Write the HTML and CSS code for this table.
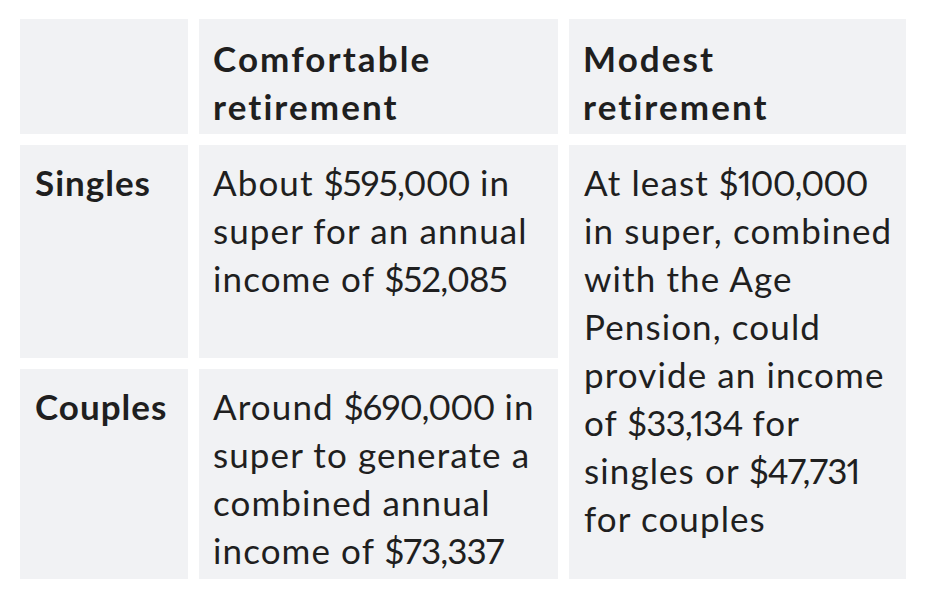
FILE: index.html
```html
<!DOCTYPE html>
<html lang="en">
<head>
<meta charset="utf-8">
<title>Retirement standard</title>
<link rel="stylesheet" href="styles.css">
</head>
<body>
<div class="table">
  <div class="cell head"></div>
  <div class="cell head">Comfortable<br>retirement</div>
  <div class="cell head">Modest<br>retirement</div>

  <div class="cell label">Singles</div>
  <div class="cell">About <span class="amt">$595,000</span> in<br>super for an annual<br>income of <span class="amt">$52,085</span></div>
  <div class="cell tall">At least <span class="amt">$100,000</span><br>in super, combined<br>with the Age<br>Pension, could<br>provide an income<br>of <span class="amt">$33,134</span> for<br>singles or <span class="amt">$47,731</span><br>for couples</div>

  <div class="cell label">Couples</div>
  <div class="cell">Around <span class="amt">$690,000</span> in<br>super to generate a<br>combined annual<br>income of <span class="amt">$73,337</span></div>
</div>
</body>
</html>
```

FILE: styles.css
```css
html, body {
  margin: 0;
  padding: 0;
  background: #ffffff;
}

body {
  padding: 19px 0 0 20px;
  font-family: Lato, "Liberation Sans", sans-serif;
  color: #1f1f1f;
}

.table {
  display: grid;
  grid-template-columns: 168px 359px 337px;
  grid-template-rows: 115px 213px 210px;
  gap: 11px;
}

.cell {
  background: #f1f2f4;
  padding: 13px 6px 0 14px;
  font-size: 35px;
  line-height: 48px;
  letter-spacing: 1.1px;
  font-variant-numeric: proportional-nums;
  white-space: nowrap;
  box-sizing: border-box;
}

.amt {
  letter-spacing: -0.9px;
}

.head {
  font-weight: 700;
  letter-spacing: 2.1px;
  padding-top: 15px;
}

.label {
  font-weight: 700;
  letter-spacing: 1px;
  padding-left: 15px;
}

.tall {
  grid-column: 3;
  grid-row: 2 / span 2;
  padding-left: 15px;
}
```
